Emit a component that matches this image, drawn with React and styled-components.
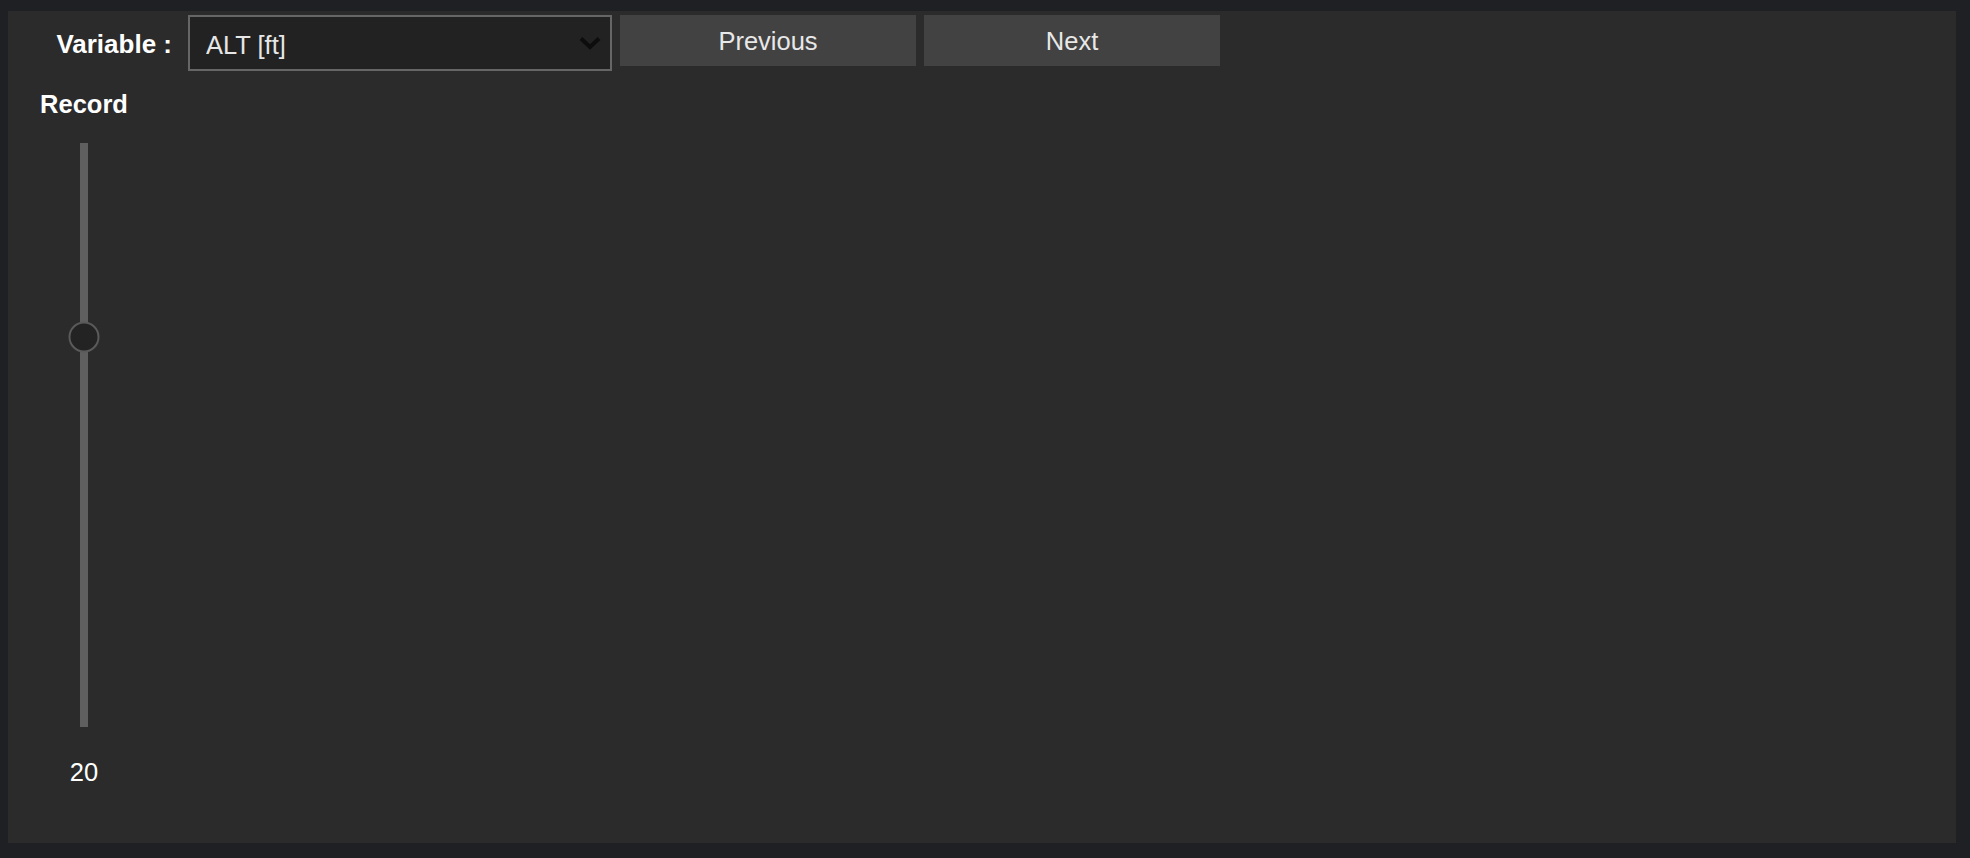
import React, { useState } from "react";
import styled, { createGlobalStyle } from "styled-components";

const GlobalStyle = createGlobalStyle`
  body {
    margin: 0;
    background-color: #1f2023;
    font-family: "Liberation Sans", Arial, sans-serif;
  }
`;

const Panel = styled.div`
  box-sizing: border-box;
  margin: 11px 14px 15px 8px;
  height: 832px;
  background-color: #2b2b2b;
  padding-top: 4px;
  display: flex;
  flex-direction: column;
`;

const Toolbar = styled.div`
  display: flex;
  align-items: flex-start;
  height: 56px;
`;

const Label = styled.label`
  width: 124px;
  margin-left: 40px;
  margin-right: 16px;
  text-align: right;
  line-height: 59px;
  font-size: 26px;
  font-weight: bold;
  color: #ffffff;
  white-space: nowrap;
`;

const SelectWrap = styled.div`
  position: relative;
  width: 424px;
  height: 56px;
  margin-right: 8px;
`;

const Select = styled.select`
  box-sizing: border-box;
  appearance: none;
  width: 100%;
  height: 100%;
  border: 2px solid #666666;
  border-radius: 0;
  background-color: #222222;
  color: #e6e6e6;
  font-family: "Liberation Sans", Arial, sans-serif;
  font-size: 25.5px;
  padding: 3px 0 0 16px;
  outline: none;
`;

const Chevron = styled.svg`
  position: absolute;
  right: 11px;
  top: 21px;
  pointer-events: none;
`;

const Button = styled.button`
  width: 296px;
  height: 51px;
  margin-right: 8px;
  border: none;
  background-color: #424242;
  color: #e8e8e8;
  font-family: "Liberation Sans", Arial, sans-serif;
  font-size: 25.5px;
  padding: 2px 0 0;
  cursor: pointer;
`;

const Side = styled.div`
  width: 112px;
  margin-left: 20px;
  margin-top: 19px;
  display: flex;
  flex-direction: column;
  align-items: center;
`;

const SideTitle = styled.div`
  font-size: 25.5px;
  font-weight: bold;
  line-height: 29px;
  color: #ffffff;
`;

const Track = styled.div`
  position: relative;
  width: 8px;
  height: 584px;
  margin-top: 24px;
  background-color: #5f5f5f;
`;

const Thumb = styled.div`
  position: absolute;
  left: 50%;
  width: 31px;
  height: 31px;
  box-sizing: border-box;
  border-radius: 50%;
  background-color: #232323;
  border: 2px solid #5a5a5a;
  transform: translate(-50%, -50%);
`;

const Value = styled.div`
  margin-top: 31px;
  font-size: 25.5px;
  line-height: 29px;
  color: #ffffff;
`;

const VerticalSlider = ({ value, min, max }) => {
  const pct = ((max - value) / (max - min)) * 100;
  return (
    <Track>
      <Thumb style={{ top: `calc(${pct}% - 1px)` }} />
    </Track>
  );
};

const App = () => {
  const [record] = useState(20);
  return (
    <>
      <GlobalStyle />
      <Panel>
        <Toolbar>
          <Label htmlFor="variable">Variable :</Label>
          <SelectWrap>
            <Select id="variable" defaultValue="ALT">
              <option value="ALT">ALT [ft]</option>
              <option value="SPD">SPD [kt]</option>
            </Select>
            <Chevron width="22" height="14" viewBox="0 0 22 14">
              <path
                d="M2 2.5 L11 11 L20 2.5"
                fill="none"
                stroke="#0d0d0d"
                strokeWidth="4"
              />
            </Chevron>
          </SelectWrap>
          <Button>Previous</Button>
          <Button>Next</Button>
        </Toolbar>
        <Side>
          <SideTitle>Record</SideTitle>
          <VerticalSlider value={record} min={0} max={30} />
          <Value>{record}</Value>
        </Side>
      </Panel>
    </>
  );
};

export default App;
